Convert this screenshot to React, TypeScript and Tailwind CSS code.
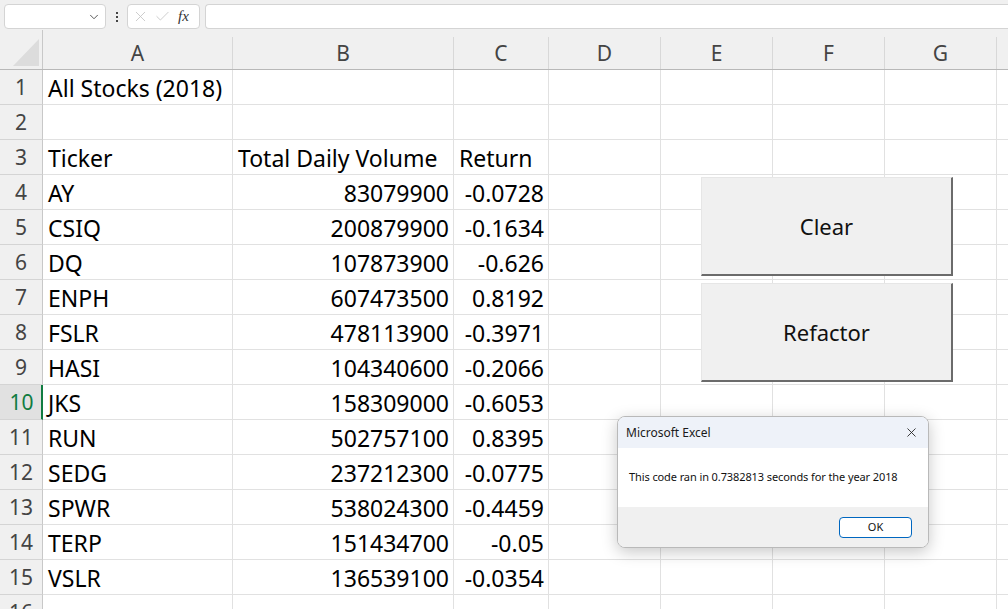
import { ChevronDown, X, Check } from 'lucide-react';

const columns = [
  { name: 'A', width: 'w-[190px]' },
  { name: 'B', width: 'w-[221px]' },
  { name: 'C', width: 'w-[95px]' },
  { name: 'D', width: 'w-[112px]' },
  { name: 'E', width: 'w-[112px]' },
  { name: 'F', width: 'w-[112px]' },
  { name: 'G', width: 'w-[112px]' },
  { name: 'H', width: 'w-[112px]' },
];

const stocks = [
  ['AY', '83079900', '-0.0728'],
  ['CSIQ', '200879900', '-0.1634'],
  ['DQ', '107873900', '-0.626'],
  ['ENPH', '607473500', '0.8192'],
  ['FSLR', '478113900', '-0.3971'],
  ['HASI', '104340600', '-0.2066'],
  ['JKS', '158309000', '-0.6053'],
  ['RUN', '502757100', '0.8395'],
  ['SEDG', '237212300', '-0.0775'],
  ['SPWR', '538024300', '-0.4459'],
  ['TERP', '151434700', '-0.05'],
  ['VSLR', '136539100', '-0.0354'],
];

// rows 1..16, each with values for A, B, C
const rows: string[][] = [
  ['All Stocks (2018)', '', ''],
  ['', '', ''],
  ['Ticker', 'Total Daily Volume', 'Return'],
  ...stocks,
  ['', '', ''],
];

function FormulaBar() {
  return (
    <div className="h-[30px] bg-[#f0f0f0] flex items-start pt-[4px] pl-[4px] gap-0">
      <div className="w-[102px] h-[25px] bg-white border border-[#d4d4d4] rounded-[4px] flex items-center justify-end pr-[4px]">
        <ChevronDown className="w-[14px] h-[14px] text-[#444]" strokeWidth={1.5} />
      </div>
      <div className="w-[21px] h-[25px] flex flex-col items-center justify-center gap-[2px]">
        <span className="w-[2px] h-[2px] bg-[#444]" />
        <span className="w-[2px] h-[2px] bg-[#444]" />
        <span className="w-[2px] h-[2px] bg-[#444]" />
      </div>
      <div className="w-[73px] h-[25px] bg-white border border-[#d4d4d4] rounded-[4px] flex items-center pl-[4px] gap-[5px]">
        <X className="w-[17px] h-[17px] text-[#c4c4c4]" strokeWidth={1.2} />
        <Check className="w-[17px] h-[17px] text-[#c4c4c4]" strokeWidth={1.2} />
        <span className="text-[15px] italic text-[#333] font-['Liberation_Serif',serif] leading-none ml-[2px]">fx</span>
      </div>
      <div className="flex-1 h-[25px] ml-[5px] bg-white border border-[#d4d4d4] border-r-0 rounded-l-[4px]" />
    </div>
  );
}

function ColumnHeaders() {
  return (
    <div className="flex h-[40px] bg-[#f0f0f0] border-b border-[#b8b8b8]">
      <div className="w-[43px] shrink-0 border-r border-[#c8c8c8] flex items-end justify-end pr-[3px] pb-[3px]">
        <svg width="26" height="27" viewBox="0 0 26 27">
          <polygon points="26,0 26,27 0,27" fill="#dcdcdc" />
        </svg>
      </div>
      {columns.map((c) => (
        <div key={c.name} className={`${c.width} shrink-0 flex items-end`}>
          <div className="w-full h-[32px] border-r border-[#d8d8d8] flex items-center justify-center text-[21px] leading-none text-[#444]">
            {c.name}
          </div>
        </div>
      ))}
    </div>
  );
}

function Grid() {
  return (
    <div>
      {rows.map((r, i) => {
        const n = i + 1;
        const active = n === 10;
        return (
          <div key={n} className="flex h-[35px]">
            <div
              className={
                active
                  ? 'w-[43px] shrink-0 bg-[#e1e1e1] border-b border-[#d4d4d4] border-r-2 border-r-[#107c41] flex items-center justify-center pl-[2px] text-[21px] leading-none text-[#107c41]'
                  : 'w-[43px] shrink-0 bg-[#f0f0f0] border-b border-[#d4d4d4] border-r border-r-[#c8c8c8] flex items-center justify-center text-[21px] leading-none text-[#444]'
              }
            >
              {n}
            </div>
            {columns.map((c, ci) => {
              const val = r[ci] ?? '';
              const rightAlign = i >= 3 && (ci === 1 || ci === 2);
              return (
                <div
                  key={c.name}
                  className={`${c.width} shrink-0 border-r border-b border-[#e1e1e1] flex items-center pt-[2px] whitespace-nowrap text-[23px] leading-none text-black ${
                    rightAlign ? 'justify-end pr-[4px]' : 'pl-[5px]'
                  } ${ci === 0 && n === 1 ? 'overflow-visible' : 'overflow-hidden'}`}
                >
                  {val}
                </div>
              );
            })}
          </div>
        );
      })}
    </div>
  );
}

function SheetButton({ label }: { label: string }) {
  return (
    <div className="w-[252px] h-[99px] bg-[#f0f0f0] border-t border-l border-[#e6e6e6] border-r-2 border-b-2 border-r-[#6b6b6b] border-b-[#6b6b6b] flex items-center justify-center text-[22px] text-[#111] font-['Noto_Sans',sans-serif]">
      {label}
    </div>
  );
}

function MessageBox() {
  return (
    <div className="absolute left-[617px] top-[416px] w-[312px] h-[132px] rounded-[8px] border border-[#b9b9b9] bg-white overflow-hidden shadow-[0_4px_16px_rgba(0,0,0,0.22)] font-['Noto_Sans',sans-serif] flex flex-col">
      <div className="h-[31px] bg-[#eef2f9] flex items-center justify-between pl-[8px] pr-[9px]">
        <span className="text-[12px] text-[#1a1a1a]">Microsoft Excel</span>
        <X className="w-[15px] h-[15px] text-[#222]" strokeWidth={1.4} />
      </div>
      <div className="h-[59px] bg-white flex items-center pl-[11px]">
        <span className="text-[11px] text-[#111] tracking-[-0.1px]">This code ran in 0.7382813 seconds for the year 2018</span>
      </div>
      <div className="flex-1 bg-[#f0f0f0] flex items-start justify-end pt-[10px] pr-[16px]">
        <div className="w-[73px] h-[21px] bg-white border border-[#0067c0] rounded-[4px] flex items-center justify-center text-[11px] text-[#111]">
          OK
        </div>
      </div>
    </div>
  );
}

export default function App() {
  return (
    <div className="relative w-[1008px] h-[609px] overflow-hidden bg-white font-['Noto_Sans',sans-serif]">
      <FormulaBar />
      <ColumnHeaders />
      <Grid />
      <div className="absolute left-[701px] top-[177px] flex flex-col gap-[7px]">
        <SheetButton label="Clear" />
        <SheetButton label="Refactor" />
      </div>
      <MessageBox />
    </div>
  );
}
